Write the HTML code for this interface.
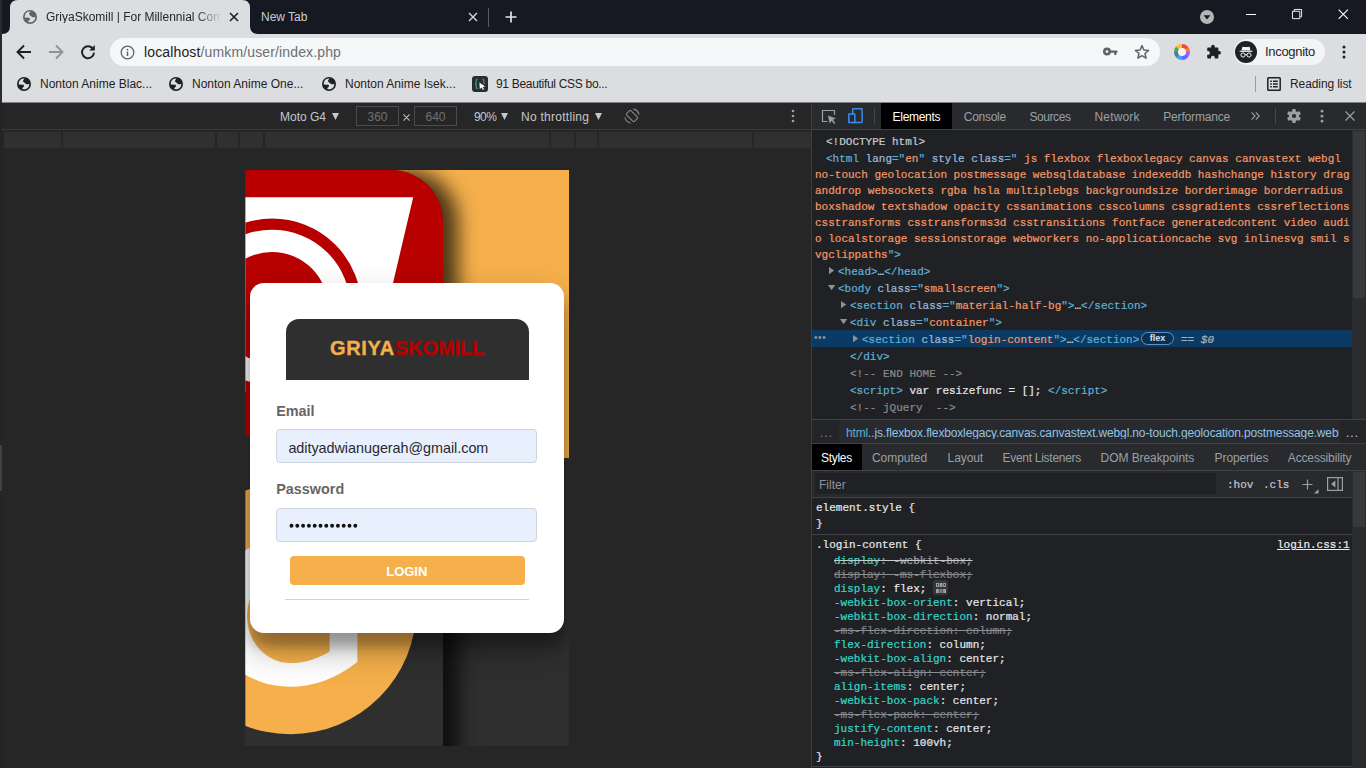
<!DOCTYPE html>
<html lang="en">
<head>
<meta charset="utf-8">
<title>GriyaSkomill</title>
<style>
*{box-sizing:border-box;margin:0;padding:0}
html,body{width:1366px;height:768px;overflow:hidden;background:#262626;font-family:"Liberation Sans",sans-serif;}
body{position:relative}
.abs{position:absolute}
.t{position:absolute;white-space:nowrap;line-height:1}
svg{position:absolute;overflow:visible}
/* ---------- chrome top ---------- */
#tabstrip{left:0;top:0;width:1366px;height:34px;background:#161922}
#toolbar{left:0;top:34px;width:1366px;height:69px;background:#dcdde1}
#leftedge{left:0;top:0;width:2px;height:768px;background:linear-gradient(#2a2b2c 0,#2a2b2c 103px,#222527 103px,#222527 445px,#3f4244 445px,#3f4244 491px,#222527 491px)}
#tab1{left:10px;top:0;width:240px;height:34px;background:#dcdde1;border-radius:8px 8px 0 0}
#omni{left:110px;top:38px;width:1050px;height:28px;border-radius:14px;background:#f6f7f8}
.ui{font-size:12px;color:#1d1e21}
/* ---------- device toolbar ---------- */
#devbar{left:2px;top:103px;width:809px;height:26px;background:#262626}
#devline{left:2px;top:129px;width:809px;height:1px;background:#3a3a3a}
.mq{position:absolute;top:132px;height:16px;background:#303030}
.dv{font-size:12px;color:#c4c7cc;margin-top:1px}
.mqs{top:132px;height:15px;width:2px;background:#262626}
/* ---------- devtools ---------- */
#dt{left:811px;top:103px;width:555px;height:665px;background:#202124;border-left:1px solid #3d3d3d}
.mono{font-family:"Liberation Mono",monospace;font-size:11px}

.dtui{font-size:12px;margin-top:1px}
.ln{line-height:14px;height:14px;white-space:pre;margin-top:1px;-webkit-text-stroke:0.22px currentColor}
.tg{color:#5db0d7}.an{color:#9bbbdc}.av{color:#f29766}.cm{color:#898989}.dc{color:#c5c8cc}.tx{color:#e3e5e8}
.pr{color:#35d4c7}.gr{color:#7f8286}
.so{text-decoration:line-through;text-decoration-color:#c8cacd}
.so .tx{color:#9da1a6}
.sg{text-decoration:line-through;text-decoration-color:#8a8d91}
.fx{display:inline-block;width:13px;height:13px;background:#4a4c50;border-radius:2px;vertical-align:-2px;margin-left:2px}
</style>
</head>
<body>
<!-- CHROME TOP -->
<div class="abs" id="tabstrip"></div>
<div class="abs" id="toolbar"></div>
<svg style="left:0;top:0" width="270" height="34"><path d="M2,34 Q10,34 10,26 L10,8 Q10,0 18,0 L242,0 Q250,0 250,8 L250,26 Q250,34 258,34 Z" fill="#dcdde1"/></svg>
<!-- tab1 globe -->
<svg style="left:23px;top:10px;color:#5f6368" width="14" height="14" viewBox="0 0 14 14"><use href="#globe"/></svg>
<div class="t ui" id="tabtitle" style="left:46px;top:11px;font-size:12px;color:#25272b;width:176px;overflow:hidden;-webkit-mask-image:linear-gradient(90deg,#000 85%,transparent)">GriyaSkomill | For Millennial Comm</div>
<svg style="left:229px;top:12px" width="10" height="10" viewBox="0 0 10 10"><path d="M1,1 L9,9 M9,1 L1,9" stroke="#1f2023" stroke-width="1.6" fill="none"/></svg>
<div class="t ui" id="tab2title" style="left:261px;top:11px;font-size:12px;color:#c9ccd1">New Tab</div>
<svg style="left:468px;top:12px" width="10" height="10" viewBox="0 0 10 10"><path d="M1,1 L9,9 M9,1 L1,9" stroke="#d5d7db" stroke-width="1.4" fill="none"/></svg>
<div class="abs" style="left:488px;top:8px;width:1px;height:19px;background:#5a5d66"></div>
<svg style="left:505px;top:11px" width="12" height="12" viewBox="0 0 12 12"><path d="M6,0.5 V11.5 M0.5,6 H11.5" stroke="#e4e5e8" stroke-width="1.7" fill="none"/></svg>
<!-- window controls -->
<svg style="left:1200px;top:10px" width="14" height="14" viewBox="0 0 14 14"><circle cx="7" cy="7" r="7" fill="#b4b5b8"/><path d="M3.6,5.2 H10.4 L7,9.6 Z" fill="#161922"/></svg>
<div class="abs" style="left:1246px;top:14px;width:10px;height:1px;background:#fff"></div>
<svg style="left:1292px;top:9px" width="11" height="11" viewBox="0 0 12 12"><path d="M0.5,2.5 H8.5 V10.5 H0.5 Z M2.5,2.5 V0.5 H10.5 V8.5 H8.5" stroke="#fff" stroke-width="1" fill="none"/></svg>
<svg style="left:1338px;top:9px" width="11" height="11" viewBox="0 0 12 12"><path d="M0.7,0.7 L10.8,10.8 M10.8,0.7 L0.7,10.8" stroke="#fff" stroke-width="1.2" fill="none"/></svg>
<!-- nav buttons -->
<svg style="left:16px;top:44px" width="16" height="16" viewBox="0 0 16 16"><path d="M15,8 H2.5 M8,1.5 L1.5,8 L8,14.5" stroke="#1f2023" stroke-width="1.9" fill="none"/></svg>
<svg style="left:48px;top:44px" width="16" height="16" viewBox="0 0 16 16"><path d="M1,8 H13.5 M8,1.5 L14.5,8 L8,14.5" stroke="#8f9296" stroke-width="1.9" fill="none"/></svg>
<svg style="left:80px;top:44px" width="16" height="16" viewBox="0 0 16 16"><path d="M13.2,5.2 A6,6 0 1 0 14,8.6" stroke="#1f2023" stroke-width="1.9" fill="none"/><path d="M14.8,1 V6.6 H9.2 Z" fill="#1f2023"/></svg>
<div class="abs" id="omni"></div>
<svg style="left:120px;top:45px" width="15" height="15" viewBox="0 0 15 15"><circle cx="7.5" cy="7.5" r="6.3" stroke="#5f6368" stroke-width="1.3" fill="none"/><path d="M7.5,6.6 V11" stroke="#5f6368" stroke-width="1.5"/><circle cx="7.5" cy="4.6" r="0.9" fill="#5f6368"/></svg>
<div class="t" id="url" style="left:144px;top:45px;font-size:14px;color:#202124;letter-spacing:0.138px">localhost<span style="color:#6b6f75">/umkm/user/index.php</span></div>
<!-- key -->
<svg style="left:1103px;top:46px" width="16" height="12" viewBox="0 0 16 12"><circle cx="4" cy="5.6" r="2.7" stroke="#5f6368" stroke-width="2.6" fill="none"/><path d="M7,4.4 H14.4 V6.8 H13.4 V9 H11.2 V6.8 H7 Z" fill="#5f6368"/></svg>
<!-- star -->
<svg style="left:1134px;top:44px" width="16" height="16" viewBox="0 0 16 16"><path d="M8,1.6 L9.9,6 L14.6,6.4 L11,9.5 L12.1,14.2 L8,11.7 L3.9,14.2 L5,9.5 L1.4,6.4 L6.1,6 Z" stroke="#5f6368" stroke-width="1.5" fill="none" stroke-linejoin="round"/></svg>
<!-- colour wheel -->
<div class="abs" style="left:1174px;top:44px;width:16px;height:16px;border-radius:50%;background:conic-gradient(#f0483e 0 45deg,#f5792a 45deg 90deg,#a259ff 90deg 135deg,#5b6cf9 135deg 180deg,#3fa1f2 180deg 225deg,#4b7b8c 225deg 270deg,#35b25d 270deg 315deg,#f6c02d 315deg 360deg)"></div>
<div class="abs" style="left:1178px;top:48px;width:8px;height:8px;border-radius:50%;background:#f2f3f5"></div>
<!-- puzzle -->
<svg style="left:1205.3px;top:44px" width="16" height="16" viewBox="0 0 16 16"><path d="M6.2,2.6 A1.8,1.8 0 0 1 9.8,2.6 V3.6 H12.4 Q13.4,3.6 13.4,4.6 V7 H14.2 A1.8,1.8 0 0 1 14.2,10.6 H13.4 V13.4 Q13.4,14.4 12.4,14.4 H9.8 V13.6 A1.9,1.9 0 0 0 6,13.6 V14.4 H3.2 Q2.2,14.4 2.2,13.4 V10.8 H3 A1.9,1.9 0 0 0 3,7 H2.2 V4.6 Q2.2,3.6 3.2,3.6 H6.2 Z" fill="#1f2023"/></svg>
<!-- incognito pill -->
<div class="abs" style="left:1234px;top:39px;width:91px;height:26px;border-radius:13px;background:#f3f4f5"></div>
<div class="abs" style="left:1235px;top:41px;width:22px;height:22px;border-radius:50%;background:#202124"></div>
<svg style="left:1235px;top:41px" width="22" height="22" viewBox="0 0 22 22"><path d="M7.6,5.4 L8.6,5.9 H13.4 L14.4,5.4 L15.6,9.4 H6.4 Z" fill="#f3f4f5"/><path d="M4.6,10.3 H17.4" stroke="#f3f4f5" stroke-width="1.1"/><circle cx="8" cy="14" r="2.1" stroke="#f3f4f5" stroke-width="1" fill="none"/><circle cx="14" cy="14" r="2.1" stroke="#f3f4f5" stroke-width="1" fill="none"/><path d="M10.1,13.6 H11.9" stroke="#f3f4f5" stroke-width="1"/></svg>
<div class="t ui" id="incog" style="left:1265px;top:45px;font-size:13px;color:#25272b;letter-spacing:-0.311px">Incognito</div>
<svg style="left:1342px;top:44px" width="4" height="16" viewBox="0 0 4 16"><circle cx="2" cy="3" r="1.5" fill="#1f2023"/><circle cx="2" cy="8" r="1.5" fill="#1f2023"/><circle cx="2" cy="13" r="1.5" fill="#1f2023"/></svg>
<!-- bookmarks -->
<svg class="gl" style="left:17px;top:77px;color:#1f2023" width="14" height="14" viewBox="0 0 14 14"><use href="#globe"/></svg>
<div class="t ui bm" id="bm1" style="left:40px;top:78px">Nonton Anime Blac...</div>
<svg class="gl" style="left:169px;top:77px;color:#1f2023" width="14" height="14" viewBox="0 0 14 14"><use href="#globe"/></svg>
<div class="t ui bm" id="bm2" style="left:192px;top:78px">Nonton Anime One...</div>
<svg class="gl" style="left:322px;top:77px;color:#1f2023" width="14" height="14" viewBox="0 0 14 14"><use href="#globe"/></svg>
<div class="t ui bm" id="bm3" style="left:345px;top:78px">Nonton Anime Isek...</div>
<div class="abs" style="left:472px;top:76px;width:16px;height:16px;border-radius:3px;background:#2b2d33"></div>
<svg style="left:472px;top:76px" width="16" height="16" viewBox="0 0 16 16"><path d="M5.6,3 Q4.2,3 4.2,4.4 V6.6 Q4.2,7.6 3,7.8 Q4.2,8 4.2,9 V11.2 Q4.2,12.6 5.6,12.6" stroke="#2fb47c" stroke-width="1.1" fill="none"/><path d="M10.4,3 Q11.8,3 11.8,4.4 V6.6 Q11.8,7.6 13,7.8" stroke="#2fb47c" stroke-width="1.1" fill="none"/><path d="M7.4,6.6 L13.2,10.6 L10.8,11 L12,13.6 L10.9,14.1 L9.7,11.5 L7.8,13 Z" fill="#fff"/></svg>
<div class="t ui bm" id="bm4" style="left:496px;top:78px;letter-spacing:-0.305px">91 Beautiful CSS bo...</div>
<div class="abs" style="left:1255px;top:76px;width:1px;height:16px;background:#9a9ca1"></div>
<svg style="left:1267px;top:77px" width="14" height="14" viewBox="0 0 14 14"><rect x="0.8" y="0.8" width="12.4" height="12.4" rx="0.8" stroke="#1f2023" stroke-width="1.5" fill="none"/><path d="M3.2,4.2 H4.8 M6,4.2 H10.8 M3.2,7 H4.8 M6,7 H10.8 M3.2,9.8 H4.8 M6,9.8 H10.8" stroke="#1f2023" stroke-width="1.5"/></svg>
<div class="t ui bm" id="rl" style="left:1290px;top:78px;letter-spacing:-0.092px">Reading list</div>
<svg width="0" height="0"><defs><g id="globe"><circle cx="7" cy="7" r="7" fill="currentColor"/><path d="M1.7,6.9 Q1.9,4 3.5,2.6 Q5.4,1.4 7.6,1.6 Q5.8,3 6,4.4 Q7.2,5.4 8.4,6.6 Q9.4,7.5 10,7.3 Q11.4,7.3 12.3,6.8 Q12.4,8.6 11.5,10 Q10.6,11.5 9,12 Q7.4,12.6 6,12.2 Q5,11.6 5.3,10.9 Q6.6,10.2 6.9,9.5 Q7.2,8.4 6.5,7.8 Q4,7.6 1.7,7.6 Z" fill="#dcdde1"/></g></defs></svg>
<div class="abs" style="left:2px;top:102px;width:1364px;height:1px;background:#808184"></div>
<!-- DEVICE TOOLBAR -->
<div class="abs" id="devbar"></div>
<div class="abs" id="devline"></div>
<div class="t dv" id="d1" style="left:280px;top:110px">Moto G4</div>
<svg style="left:332px;top:113px" width="7" height="7" viewBox="0 0 7 7"><path d="M0,0 H7 L3.5,7 Z" fill="#c4c7cc"/></svg>
<div class="abs" style="left:356px;top:106px;width:43px;height:20px;border:1px solid #4b4b4b"></div>
<div class="t dv" style="left:356px;top:110px;width:43px;text-align:center;color:#6f7174">360</div>
<svg style="left:403px;top:114px" width="7" height="7" viewBox="0 0 7 7"><path d="M0.4,0.4 L6.6,6.6 M6.6,0.4 L0.4,6.6" stroke="#b9bbbf" stroke-width="1.1" fill="none"/></svg>
<div class="abs" style="left:414px;top:106px;width:43px;height:20px;border:1px solid #4b4b4b"></div>
<div class="t dv" style="left:414px;top:110px;width:43px;text-align:center;color:#6f7174">640</div>
<div class="t dv" id="d2" style="left:474px;top:110px;letter-spacing:-0.567px">90%</div>
<svg style="left:501px;top:113px" width="7" height="7" viewBox="0 0 7 7"><path d="M0,0 H7 L3.5,7 Z" fill="#c4c7cc"/></svg>
<div class="t dv" id="d3" style="left:521px;top:110px;letter-spacing:0.269px">No throttling</div>
<svg style="left:595px;top:113px" width="7" height="7" viewBox="0 0 7 7"><path d="M0,0 H7 L3.5,7 Z" fill="#c4c7cc"/></svg>
<svg style="left:624px;top:108px" width="16" height="16" viewBox="0 0 16 16"><g transform="rotate(-45 8 8)" stroke="#8c8c8c" fill="none" stroke-width="1"><rect x="4.9" y="2.5" width="6.2" height="11" rx="0.9"/></g><path d="M9.4,1 A7.2,7.2 0 0 1 15,6.6 M6.6,15 A7.2,7.2 0 0 1 1,9.4" stroke="#7d7d7d" stroke-width="1.3" fill="none"/></svg>
<svg style="left:791px;top:109px" width="4" height="14" viewBox="0 0 4 14"><circle cx="2" cy="2" r="1.3" fill="#9aa0a6"/><circle cx="2" cy="7" r="1.3" fill="#9aa0a6"/><circle cx="2" cy="12" r="1.3" fill="#9aa0a6"/></svg>
<div class="mq" style="left:4px;width:807px"></div>
<div class="abs mqs" style="left:60.5px"></div><div class="abs mqs" style="left:215px"></div><div class="abs mqs" style="left:238px"></div><div class="abs mqs" style="left:263px"></div><div class="abs mqs" style="left:549px"></div><div class="abs mqs" style="left:574px"></div><div class="abs mqs" style="left:597px"></div><div class="abs mqs" style="left:751.5px"></div>
<!-- PAGE -->
<div class="abs" id="page" style="left:245px;top:170px;width:324px;height:576px;overflow:hidden;background:#2f2f2f">
 <div class="abs" style="left:0;top:0;width:324px;height:288px;background:#f5b04c"></div>
 <!-- logo square w/ shadow: coordinates local to page (screen - 245, -170) -->
 <div class="abs" style="left:-100px;top:0;width:298px;height:700px;border-radius:0 52px 0 0;background:#2f2f2f;box-shadow:15px 0 19px rgba(0,0,0,.7)"></div>
 <svg style="left:0;top:0" width="324" height="576" viewBox="245 170 324 576">
  <defs><clipPath id="sq"><path d="M245.4,170 H391 A52,52 0 0 1 443,222 V746 H245.4 Z"/></clipPath></defs>
  <g clip-path="url(#sq)">
   <rect x="245.4" y="170" width="198" height="266" fill="#b80000"/>
   <path d="M245,197.2 H413.2 L367.4,392 H245 Z" fill="#fff"/>
   <ellipse cx="272" cy="307.4" rx="83.85" ry="83.25" fill="none" stroke="#b80000" stroke-width="11.1"/>
   <ellipse cx="272" cy="307.4" rx="56" ry="55.4" fill="#b80000"/>
   <rect x="245.4" y="436" width="198" height="310" fill="#2f2f2f"/>
   <circle cx="290.3" cy="608.25" r="126" fill="#f5b04c"/>
   <path d="M290.3,538.2 A82,74.3 0 0 0 290.3,686.8 Q325,686.8 357.4,661.9 V520 Z" fill="#fff"/>
   <path d="M290.3,568.9 A43.4,47.1 0 0 0 290.3,663.1 C306,663.1 319,658 329.6,651.4 V560 H290.3 Z" fill="#f5b04c"/>
  </g>
 </svg>
 <div class="abs" id="card" style="left:4.8px;top:112.5px;width:314.4px;height:350.8px;border-radius:14px;background:#fff;box-shadow:0 17px 34px rgba(0,0,0,.3),0 13.5px 10.8px rgba(0,0,0,.22)"></div>
</div>
<!-- card -->
<div class="abs" style="left:285.6px;top:318.6px;width:243px;height:61.7px;border-radius:13px 13px 0 0;background:#2f2f2f"></div>
<div class="t" id="brand" style="left:329.9px;top:338px;font-size:20px;font-weight:bold;color:#f5b04c;letter-spacing:0.68px;-webkit-text-stroke:0.35px #f5b04c">GRIYA<span style="color:#b80000;letter-spacing:-0.05px;-webkit-text-stroke:0.35px #b80000">SKOMILL</span></div>
<div class="t" id="lblE" style="left:276.2px;top:404px;font-size:14.4px;font-weight:bold;color:#666">Email</div>
<div class="abs" style="left:276.3px;top:429.2px;width:261.2px;height:34px;border-radius:4px;background:#e8f0fe;border:1px solid #cfd4dc"></div>
<div class="t" id="email" style="left:288.4px;top:441px;font-size:14.4px;color:#2a2a2c;letter-spacing:-0.04px">adityadwianugerah@gmail.com</div>
<div class="t" id="lblP" style="left:276.2px;top:482px;font-size:14.4px;font-weight:bold;color:#666">Password</div>
<div class="abs" style="left:276.3px;top:507.5px;width:261.2px;height:34px;border-radius:4px;background:#e8f0fe;border:1px solid #cfd4dc"></div>
<svg id="dots" style="left:289px;top:523px" width="72" height="6" viewBox="0 0 72 6"><circle cx="2.50" cy="2.7" r="1.95" fill="#111"/><circle cx="8.30" cy="2.7" r="1.95" fill="#111"/><circle cx="14.10" cy="2.7" r="1.95" fill="#111"/><circle cx="19.90" cy="2.7" r="1.95" fill="#111"/><circle cx="25.70" cy="2.7" r="1.95" fill="#111"/><circle cx="31.50" cy="2.7" r="1.95" fill="#111"/><circle cx="37.30" cy="2.7" r="1.95" fill="#111"/><circle cx="43.10" cy="2.7" r="1.95" fill="#111"/><circle cx="48.90" cy="2.7" r="1.95" fill="#111"/><circle cx="54.70" cy="2.7" r="1.95" fill="#111"/><circle cx="60.50" cy="2.7" r="1.95" fill="#111"/><circle cx="66.30" cy="2.7" r="1.95" fill="#111"/></svg>
<div class="abs" style="left:290px;top:556px;width:235px;height:29px;border-radius:4px;background:#f5b04c"></div>
<div class="t" id="login" style="left:289.3px;top:564.7px;width:235px;text-align:center;font-size:13px;font-weight:bold;color:#fff">LOGIN</div>
<div class="abs" style="left:285px;top:599px;width:244px;height:1px;background:#d3d3d3"></div>
<!-- DEVTOOLS -->
<div class="abs" id="dt"></div>
<div class="abs" style="left:812px;top:103px;width:554px;height:26px;background:#292a2d"></div>
<div class="abs" style="left:812px;top:129px;width:554px;height:1px;background:#3f4145"></div>
<svg style="left:821px;top:109px" width="16" height="16" viewBox="0 0 16 16"><path d="M6.5,12.5 H1.5 V1.5 H13.5 V6" stroke="#9aa0a6" stroke-width="1.2" fill="none"/><path d="M7,6.4 L15,9.6 L11.8,10.8 L14.4,14 L13.2,15 L10.6,11.8 L8.6,14.4 Z" fill="#9aa0a6"/></svg>
<svg style="left:848px;top:108px" width="15" height="16" viewBox="0 0 15 16"><rect x="4.7" y="0.8" width="9.4" height="13.6" rx="0.6" stroke="#3b8af0" stroke-width="1.5" fill="none"/><rect x="0.8" y="6" width="6" height="8.6" rx="0.4" stroke="#3b8af0" stroke-width="1.5" fill="#292a2d"/></svg>
<div class="abs" style="left:874px;top:108px;width:1px;height:16px;background:#45474b"></div>
<div class="abs" style="left:881px;top:103px;width:71px;height:26px;background:#000"></div>
<div class="t dtui" id="tE" style="left:892.6px;top:110px;color:#fff;letter-spacing:-0.300px">Elements</div>
<div class="t dtui" id="tC" style="left:963.8px;top:110px;color:#9aa0a6;letter-spacing:-0.286px">Console</div>
<div class="t dtui" id="tS" style="left:1029.4px;top:110px;color:#9aa0a6;letter-spacing:-0.414px">Sources</div>
<div class="t dtui" id="tN" style="left:1094.5px;top:110px;color:#9aa0a6;letter-spacing:0.171px">Network</div>
<div class="t dtui" id="tP" style="left:1163.3px;top:110px;color:#9aa0a6;letter-spacing:-0.182px">Performance</div>
<svg style="left:1251px;top:112px" width="9" height="8" viewBox="0 0 9 8"><path d="M0.6,0.4 L4,4 L0.6,7.6 M4.8,0.4 L8.2,4 L4.8,7.6" stroke="#9aa0a6" stroke-width="1.1" fill="none"/></svg>
<div class="abs" style="left:1275px;top:108px;width:1px;height:16px;background:#45474b"></div>
<svg style="left:1286px;top:108px" width="16" height="16" viewBox="0 0 16 16"><g fill="#9aa0a6"><circle cx="8" cy="8" r="5.2"/><rect x="6.3" y="0.9" width="3.4" height="3.6" rx="0.6" transform="rotate(0 8 8)"/><rect x="6.3" y="0.9" width="3.4" height="3.6" rx="0.6" transform="rotate(60 8 8)"/><rect x="6.3" y="0.9" width="3.4" height="3.6" rx="0.6" transform="rotate(120 8 8)"/><rect x="6.3" y="0.9" width="3.4" height="3.6" rx="0.6" transform="rotate(180 8 8)"/><rect x="6.3" y="0.9" width="3.4" height="3.6" rx="0.6" transform="rotate(240 8 8)"/><rect x="6.3" y="0.9" width="3.4" height="3.6" rx="0.6" transform="rotate(300 8 8)"/></g><circle cx="8" cy="8" r="2.1" fill="#292a2d"/></svg>
<svg style="left:1320px;top:109px" width="4" height="14" viewBox="0 0 4 14"><circle cx="2" cy="2.2" r="1.4" fill="#9aa0a6"/><circle cx="2" cy="7.2" r="1.4" fill="#9aa0a6"/><circle cx="2" cy="12.2" r="1.4" fill="#9aa0a6"/></svg>
<svg style="left:1345px;top:111px" width="10" height="10" viewBox="0 0 10 10"><path d="M0.5,0.5 L9.5,9.5 M9.5,0.5 L0.5,9.5" stroke="#9aa0a6" stroke-width="1.2" fill="none"/></svg>
<div class="abs" style="left:812px;top:330px;width:540px;height:17px;background:#0b3b64"></div>
<div class="abs" style="left:1352px;top:130px;width:14px;height:289px;background:#2a2b2e"></div>
<div class="abs" style="left:1353px;top:131px;width:12px;height:167px;background:#38393c;border-radius:1px"></div>
<svg style="left:829px;top:267.2px" width="5.2" height="7.2" viewBox="0 0 5.2 7.2"><path d="M0,0 L5.2,3.6 L0,7.2Z" fill="#8e9094"/></svg>
<svg style="left:827.8px;top:285.2px" width="7.2" height="5.2" viewBox="0 0 7.2 5.2"><path d="M0,0 H7.2 L3.6,5.2Z" fill="#8e9094"/></svg>
<svg style="left:841px;top:301.2px" width="5.2" height="7.2" viewBox="0 0 5.2 7.2"><path d="M0,0 L5.2,3.6 L0,7.2Z" fill="#8e9094"/></svg>
<svg style="left:839.8px;top:319.2px" width="7.2" height="5.2" viewBox="0 0 7.2 5.2"><path d="M0,0 H7.2 L3.6,5.2Z" fill="#8e9094"/></svg>
<svg style="left:853px;top:335.2px" width="5.2" height="7.2" viewBox="0 0 5.2 7.2"><path d="M0,0 L5.2,3.6 L0,7.2Z" fill="#8e9094"/></svg>
<div class="abs" style="left:1141px;top:332px;width:33px;height:13px;border:1px solid #6d8fc0;border-radius:7px;background:#0b2f52"></div>
<div class="t" style="left:1141px;top:334px;width:33px;text-align:center;font-size:9px;color:#d6e2f5;font-weight:bold">flex</div>
<div class="t mono ln" style="left:1181px;top:332px;color:#a9b0ba">== <i>$0</i></div>
<div class="t" style="left:814px;top:333px;font-size:10px;color:#8d97a3;letter-spacing:0.6px">•••</div>
<div class="t mono ln" style="left:826px;top:134px"><span class="dc">&lt;!DOCTYPE html&gt;</span></div>
<div class="t mono ln" style="left:826px;top:151px"><span class="tg">&lt;html </span><span class="an">lang</span><span class="tg">="</span><span class="av">en</span><span class="tg">" </span><span class="an">style</span><span class="tg"> </span><span class="an">class</span><span class="tg">="</span><span class="av"> js flexbox flexboxlegacy canvas canvastext webgl</span></div>
<div class="t mono ln" style="left:815px;top:167px"><span class="av">no-touch geolocation postmessage websqldatabase indexeddb hashchange history drag</span></div>
<div class="t mono ln" style="left:815px;top:183px"><span class="av">anddrop websockets rgba hsla multiplebgs backgroundsize borderimage borderradius</span></div>
<div class="t mono ln" style="left:815px;top:199px"><span class="av">boxshadow textshadow opacity cssanimations csscolumns cssgradients cssreflections</span></div>
<div class="t mono ln" style="left:815px;top:215px"><span class="av">csstransforms csstransforms3d csstransitions fontface generatedcontent video audi</span></div>
<div class="t mono ln" style="left:815px;top:231px"><span class="av">o localstorage sessionstorage webworkers no-applicationcache svg inlinesvg smil s</span></div>
<div class="t mono ln" style="left:815px;top:247px"><span class="av">vgclippaths</span><span class="tg">"&gt;</span></div>
<div class="t mono ln" style="left:838px;top:264px"><span class="tg">&lt;head&gt;</span><span class="tx">…</span><span class="tg">&lt;/head&gt;</span></div>
<div class="t mono ln" style="left:838px;top:281px"><span class="tg">&lt;body </span><span class="an">class</span><span class="tg">="</span><span class="av">smallscreen</span><span class="tg">"&gt;</span></div>
<div class="t mono ln" style="left:850px;top:298px"><span class="tg">&lt;section </span><span class="an">class</span><span class="tg">="</span><span class="av">material-half-bg</span><span class="tg">"&gt;</span><span class="tx">…</span><span class="tg">&lt;/section&gt;</span></div>
<div class="t mono ln" style="left:850px;top:315px"><span class="tg">&lt;div </span><span class="an">class</span><span class="tg">="</span><span class="av">container</span><span class="tg">"&gt;</span></div>
<div class="t mono ln" style="left:862px;top:332px"><span class="tg">&lt;section </span><span class="an">class</span><span class="tg">="</span><span class="av">login-content</span><span class="tg">"&gt;</span><span class="tx">…</span><span class="tg">&lt;/section&gt;</span></div>
<div class="t mono ln" style="left:850px;top:349px"><span class="tg">&lt;/div&gt;</span></div>
<div class="t mono ln" style="left:850px;top:366px"><span class="cm">&lt;!-- END HOME --&gt;</span></div>
<div class="t mono ln" style="left:850px;top:383px"><span class="tg">&lt;script&gt;</span><span class="tx"> var resizefunc = []; </span><span class="tg">&lt;/script&gt;</span></div>
<div class="t mono ln" style="left:850px;top:400px"><span class="cm">&lt;!-- jQuery  --&gt;</span></div>
<div class="abs" style="left:812px;top:419px;width:554px;height:1px;background:#3f4145"></div>
<div class="abs" style="left:812px;top:420px;width:554px;height:24px;background:#292a2d"></div>
<div class="abs" style="left:812px;top:420px;width:27px;height:23px;background:#242528"></div>
<div class="abs" style="left:1340px;top:420px;width:26px;height:23px;background:#242528"></div>
<div class="t dtui" style="left:820px;top:425.5px;color:#7d8288;letter-spacing:1px">...</div>
<div class="t dtui" id="bc" style="left:846px;top:426px;color:#8fc4e6;width:493px;overflow:hidden;letter-spacing:-0.15px"><span style="color:#5db0d7">html</span>..js.flexbox.flexboxlegacy.canvas.canvastext.webgl.no-touch.geolocation.postmessage.websqldatabase</div>
<div class="t dtui" style="left:1346px;top:425.5px;color:#c8ccd1;letter-spacing:1px">...</div>
<div class="abs" style="left:812px;top:443px;width:554px;height:1px;background:#3f4145"></div>
<div class="abs" style="left:812px;top:444px;width:554px;height:26px;background:#292a2d"></div>
<div class="abs" style="left:812px;top:444px;width:50px;height:26px;background:#000"></div>
<div class="t dtui" id="sS" style="left:821px;top:451px;color:#fff;letter-spacing:-0.283px">Styles</div>
<div class="t dtui" id="sC" style="left:871.9px;top:451px;color:#9aa0a6;letter-spacing:-0.013px">Computed</div>
<div class="t dtui" id="sL" style="left:947.6px;top:451px;color:#9aa0a6;letter-spacing:-0.100px">Layout</div>
<div class="t dtui" id="sE" style="left:1002.5px;top:451px;color:#9aa0a6;letter-spacing:-0.280px">Event Listeners</div>
<div class="t dtui" id="sD" style="left:1100.6px;top:451px;color:#9aa0a6;letter-spacing:-0.073px">DOM Breakpoints</div>
<div class="t dtui" id="sP" style="left:1214.6px;top:451px;color:#9aa0a6;letter-spacing:-0.100px">Properties</div>
<div class="t dtui" id="sA" style="left:1287.8px;top:451px;color:#9aa0a6;letter-spacing:-0.146px">Accessibility</div>
<div class="abs" style="left:812px;top:470px;width:554px;height:1px;background:#3f4145"></div>
<div class="abs" style="left:812px;top:471px;width:540px;height:26px;background:#292a2d"></div>
<div class="abs" style="left:815px;top:473px;width:401px;height:21px;background:#202124"></div>
<div class="t dtui" style="left:819px;top:478px;color:#8d9298">Filter</div>
<div class="t mono ln" style="left:1227px;top:477px;color:#c3c7cc">:hov</div>
<div class="t mono ln" style="left:1263px;top:477px;color:#c3c7cc">.cls</div>
<svg style="left:1302px;top:479px" width="18" height="16" viewBox="0 0 18 16"><path d="M5.5,0.5 V10.5 M0.5,5.5 H10.5" stroke="#9aa0a6" stroke-width="1.2" fill="none"/><path d="M16.5,10 V14.5 H12Z" fill="#9aa0a6"/></svg>
<svg style="left:1327px;top:477px" width="16" height="14" viewBox="0 0 16 14"><rect x="0.6" y="0.6" width="14.8" height="12.8" stroke="#9aa0a6" stroke-width="1.2" fill="none"/><path d="M11,0.6 V13.4" stroke="#9aa0a6" stroke-width="1.2"/><path d="M8.4,3.6 V10.4 L4,7Z" fill="#9aa0a6"/></svg>
<div class="abs" style="left:812px;top:497px;width:540px;height:1px;background:#3f4145"></div>
<div class="abs" style="left:1352px;top:471px;width:14px;height:297px;background:#2a2b2e"></div>
<div class="abs" style="left:1353px;top:472px;width:12px;height:55px;background:#38393c"></div>
<div class="t mono ln " style="left:816px;top:500px"><span class="tx">element.style {</span></div>
<div class="t mono ln " style="left:816px;top:516px"><span class="tx">}</span></div>
<div class="abs" style="left:812px;top:534px;width:540px;height:1px;background:#3f4145"></div>
<div class="t mono ln " style="left:816px;top:537px"><span class="tx">.login-content {</span></div>
<div class="t mono ln" id="lcss" style="left:1277px;top:537px;color:#e8eaed;text-decoration:underline">login.css:1</div>
<div class="t mono ln " style="left:834px;top:553px"><span class="so"><span class="pr">display</span><span class="tx">: -webkit-box;</span></span></div>
<div class="t mono ln " style="left:834px;top:567px"><span class="sg"><span class="gr">display: -ms-flexbox;</span></span></div>
<div class="t mono ln " style="left:834px;top:581px"><span class="pr">display</span><span class="tx">: flex;</span></div>
<div class="t mono ln " style="left:834px;top:595px"><span class="pr">-webkit-box-orient</span><span class="tx">: vertical;</span></div>
<div class="t mono ln " style="left:834px;top:609px"><span class="pr">-webkit-box-direction</span><span class="tx">: normal;</span></div>
<div class="t mono ln " style="left:834px;top:623px"><span class="sg"><span class="gr">-ms-flex-direction: column;</span></span></div>
<div class="t mono ln " style="left:834px;top:637px"><span class="pr">flex-direction</span><span class="tx">: column;</span></div>
<div class="t mono ln " style="left:834px;top:651px"><span class="pr">-webkit-box-align</span><span class="tx">: center;</span></div>
<div class="t mono ln " style="left:834px;top:665px"><span class="sg"><span class="gr">-ms-flex-align: center;</span></span></div>
<div class="t mono ln " style="left:834px;top:679px"><span class="pr">align-items</span><span class="tx">: center;</span></div>
<div class="t mono ln " style="left:834px;top:693px"><span class="pr">-webkit-box-pack</span><span class="tx">: center;</span></div>
<div class="t mono ln " style="left:834px;top:707px"><span class="sg"><span class="gr">-ms-flex-pack: center;</span></span></div>
<div class="t mono ln " style="left:834px;top:721px"><span class="pr">justify-content</span><span class="tx">: center;</span></div>
<div class="t mono ln " style="left:834px;top:735px"><span class="pr">min-height</span><span class="tx">: 100vh;</span></div>
<div class="t mono ln " style="left:816px;top:749px"><span class="tx">}</span></div>
<div class="abs" style="left:812px;top:766px;width:540px;height:1px;background:#3f4145"></div>
<div class="abs" style="left:933.2px;top:580px;width:14.5px;height:15px;border-radius:3px;background:#35363a"></div><svg style="left:936px;top:583px" width="10" height="10" viewBox="0 0 10 10"><g fill="#9a9ea5"><rect x="0" y="0" width="2.9" height="4"/><rect x="3.55" y="0" width="2.9" height="4"/><rect x="7.1" y="0" width="2.9" height="4"/><rect x="0" y="6" width="2.9" height="4"/><rect x="3.55" y="6" width="2.9" height="4" fill="#7c8086"/><rect x="7.1" y="6" width="2.9" height="4"/></g><g fill="#35363a"><rect x="1" y="1" width="0.9" height="2"/><rect x="8.1" y="1" width="0.9" height="2"/></g></svg>
<div class="abs" id="leftedge"></div>
</body>
</html>
